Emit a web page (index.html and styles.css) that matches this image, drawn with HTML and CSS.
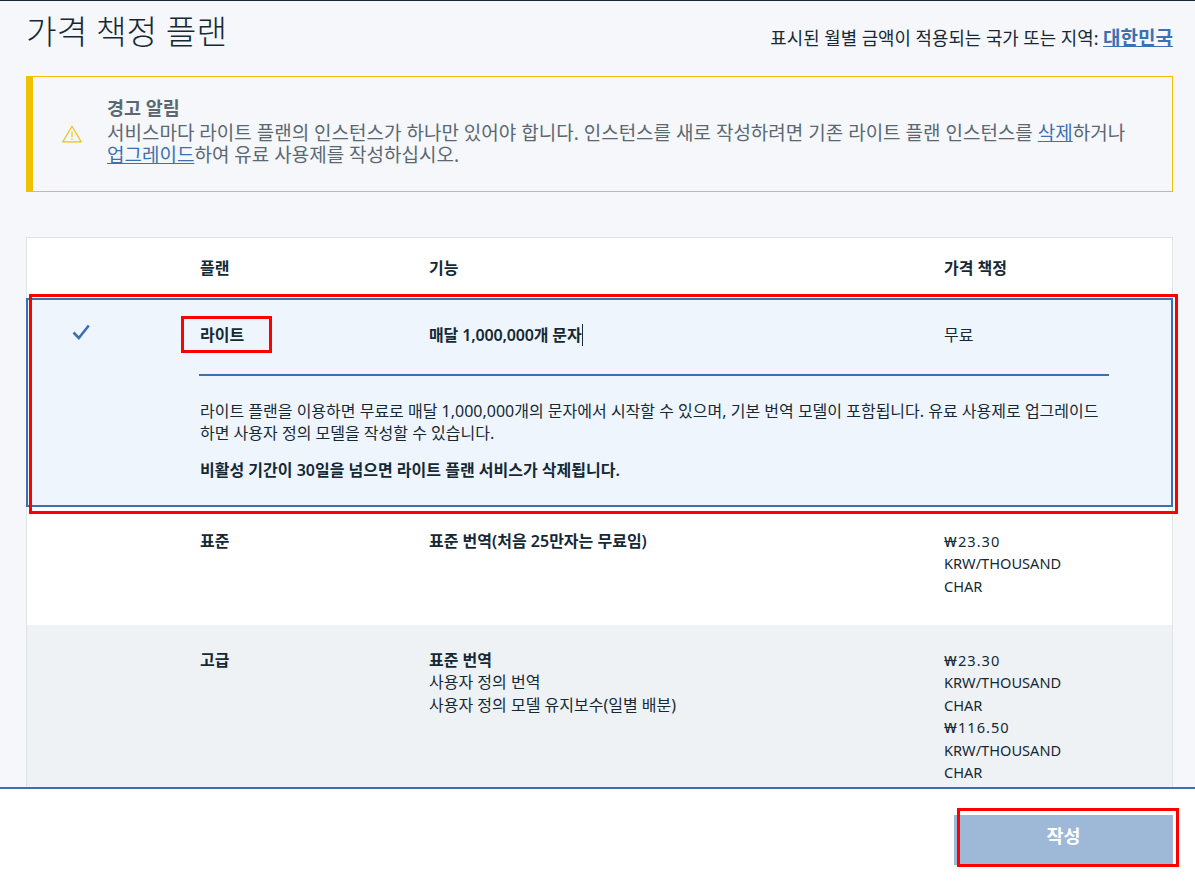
FILE: index.html
```html
<!DOCTYPE html>
<html lang="ko">
<head>
    <meta charset="UTF-8">
    <title>가격 책정 플랜</title>
    <link rel="stylesheet" href="styles.css">
</head>
<body>

<main class="content">
    <div class="page-header">
        <h1 class="page-title">가격 책정 플랜</h1>
        <p class="region">표시된 월별 금액이 적용되는 국가 또는 지역: <a href="#">대한민국</a></p>
    </div>

    <div class="alert">
        <svg class="alert-icon" width="20" height="18" viewBox="0 0 20 18" fill="none">
            <path d="M10 1.2 L19.2 16.9 H0.8 Z" stroke="#efc100" stroke-width="1.1" stroke-linejoin="round"/>
            <path d="M10 6.5 V12.2 M10 13.6 V15" stroke="#efc100" stroke-width="1.1"/>
        </svg>
        <div class="alert-text">
            <div class="alert-title">경고 알림</div>
            <p>서비스마다 라이트 플랜의 인스턴스가 하나만 있어야 합니다. 인스턴스를 새로 작성하려면 기존 라이트 플랜 인스턴스를 <a href="#">삭제</a>하거나<br><a href="#">업그레이드</a>하여 유료 사용제를 작성하십시오.</p>
        </div>
    </div>

    <div class="plans">
        <div class="plan-row plan-head">
            <div></div>
            <div>플랜</div>
            <div>기능</div>
            <div>가격 책정</div>
        </div>

        <div class="plan-selected">
            <div class="plan-row">
                <div class="check">
                    <svg width="18" height="16" viewBox="0 0 18 16" fill="none">
                        <path d="M1.5 8.5 L6.8 14 L16.8 1.5" stroke="#3d70b2" stroke-width="2.6"/>
                    </svg>
                </div>
                <div class="plan-name">라이트</div>
                <div class="plan-name feature-cursor">매달 1,000,000개 문자</div>
                <div>무료</div>
            </div>
            <div class="plan-detail">
                <p>라이트 플랜을 이용하면 무료로 매달 1,000,000개의 문자에서 시작할 수 있으며, 기본 번역 모델이 포함됩니다. 유료 사용제로 업그레이드<br>하면 사용자 정의 모델을 작성할 수 있습니다.</p>
                <p class="plan-note">비활성 기간이 30일을 넘으면 라이트 플랜 서비스가 삭제됩니다.</p>
            </div>
        </div>

        <div class="plan-row plan-standard">
            <div></div>
            <div class="plan-name">표준</div>
            <div class="plan-name">표준 번역(처음 25만자는 무료임)</div>
            <div class="price"><span class="won">₩</span><span class="amount">23.30</span><br>KRW/THOUSAND<br>CHAR</div>
        </div>

        <div class="plan-row plan-advanced">
            <div></div>
            <div class="plan-name">고급</div>
            <div>
                <div class="plan-name">표준 번역</div>
                <div>사용자 정의 번역</div>
                <div>사용자 정의 모델 유지보수(일별 배분)</div>
            </div>
            <div class="price"><span class="won">₩</span><span class="amount">23.30</span><br>KRW/THOUSAND<br>CHAR<br><span class="won">₩</span><span class="amount">116.50</span><br>KRW/THOUSAND<br>CHAR</div>
        </div>
    </div>
</main>

<footer class="footer">
    <button class="create-button">작성</button>
</footer>

<!-- red markers on the screenshot -->
<div class="marker marker-row"></div>
<div class="marker marker-name"></div>
<div class="marker marker-button"></div>

</body>
</html>
```

FILE: styles.css
```css
* {
    box-sizing: border-box;
}

html, body {
    height: 100%;
}

body {
    margin: 0;
    position: relative;
    display: flex;
    flex-direction: column;
    overflow: hidden;
    background-color: #f5f7fa;
    border-top: 1px solid #152935;
    color: #152935;
    font-family: "Noto Sans", "Noto Sans CJK KR", sans-serif;
    font-size: 16px;
    line-height: 22.4px;
}

a {
    color: #3d70b2;
}

.content {
    flex: 1;
    min-height: 0;
    overflow: hidden;
    padding: 0 22px 0 26px;
}

.page-header {
    display: flex;
    justify-content: space-between;
    align-items: flex-start;
    height: 75px;
}

.page-title {
    margin: 9px 0 0;
    font-size: 33.3px;
    font-weight: 300;
    line-height: 42px;
}

.region {
    margin: 24px 0 0;
    font-size: 17.85px;
    line-height: 26px;
}

.region a {
    font-size: 19px;
    font-weight: 700;
}

/* Warning box */
.alert {
    display: flex;
    align-items: center;
    height: 116px;
    margin-bottom: 45px;
    border: 1px solid #efc100;
    border-left-width: 7px;
    padding-left: 29px;
}

.alert-icon {
    flex: none;
}

.alert-text {
    margin: 0 0 5px 25px;
    color: #5a6872;
    font-size: 19px;
    line-height: 22px;
}

.alert-title {
    margin-bottom: 3px;
    font-size: 18.5px;
    font-weight: 700;
}

.alert-text p {
    margin: 0;
}

/* Plans table */
.plans {
    border: 1px solid #dfe3e6;
    border-bottom: 0;
    background-color: #fff;
}

.plan-row {
    display: grid;
    grid-template-columns: 173px 229px 515px 1fr;
}

.plan-head {
    height: 60px;
    align-items: center;
    font-weight: 600;
}

.plan-name {
    font-weight: 600;
}

.plan-selected {
    height: 209px;
    margin: 0 -1px;
    border: 2px solid #3d70b2;
    background-color: #eef5fd;
}

.plan-selected .plan-row {
    grid-template-columns: 172px 229px 515px 1fr;
    padding-top: 24px;
}

.check {
    padding: 0 0 0 44px;
    height: 22px;
    margin-top: -1px;
}

.feature-cursor {
    justify-self: start;
    border-right: 1px solid #152935;
    letter-spacing: -0.15px;
}

.plan-detail {
    margin: 28px 62px 0 171px;
    border-top: 2px solid #3d70b2;
    padding: 24px 0 0 1px;
    line-height: 22px;
}

.plan-detail p {
    margin: 0;
}

.plan-detail .plan-note {
    margin-top: 15px;
    font-weight: 600;
}

.price {
    font-size: 14.6px;
}

.won {
    display: inline-block;
    width: 14px;
    line-height: 1;
    transform: scaleX(1.3);
    transform-origin: left;
}

.amount {
    letter-spacing: 1px;
}

.plan-standard {
    height: 118px;
    padding-top: 23px;
}

.plan-advanced {
    height: 180px;
    padding-top: 24px;
    background-color: #eff2f5;
}

/* Footer */
.footer {
    flex: none;
    display: flex;
    justify-content: flex-end;
    align-items: flex-start;
    height: 103px;
    border-top: 2px solid #3d70b2;
    padding: 26px 22px 0 0;
    background-color: #fff;
}

.create-button {
    width: 219px;
    height: 50px;
    border: none;
    padding-bottom: 12px;
    background-color: #9eb8d8;
    color: #fff;
    font-family: inherit;
    font-size: 18.5px;
    font-weight: 700;
}

/* Red markers */
.marker {
    position: absolute;
    border: 3px solid #ff0000;
}

.marker-row {
    left: 29px;
    top: 293px;
    width: 1149px;
    height: 220px;
}

.marker-name {
    left: 181px;
    top: 315px;
    width: 91px;
    height: 37px;
}

.marker-button {
    left: 957px;
    top: 807px;
    width: 222px;
    height: 59px;
}
```
